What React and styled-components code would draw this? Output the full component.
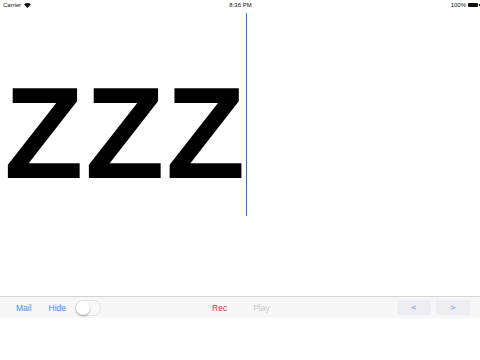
import React from "react";
import styled, { createGlobalStyle } from "styled-components";

const GlobalStyle = createGlobalStyle`
  html, body {
    margin: 0;
    padding: 0;
    background: #ffffff;
  }
  body {
    font-family: "Liberation Sans", Arial, sans-serif;
  }
`;

const Screen = styled.div`
  display: flex;
  flex-direction: column;
  width: 480px;
  height: 360px;
  overflow: hidden;
  background: #ffffff;
`;

const StatusBar = styled.div`
  display: grid;
  grid-template-columns: 1fr auto 1fr;
  align-items: center;
  height: 10px;
  padding: 0 2px 0 3px;
  font-size: 6px;
  color: #111;
`;

const StatusLeft = styled.div`
  display: flex;
  align-items: center;
  gap: 3px;
`;

const StatusRight = styled.div`
  display: flex;
  align-items: center;
  justify-content: flex-end;
  gap: 2px;
`;

const Battery = styled.div`
  width: 10px;
  height: 4px;
  background: #111;
  border-radius: 1px;
  position: relative;

  &::after {
    content: "";
    position: absolute;
    right: -2px;
    top: 1px;
    width: 1px;
    height: 2px;
    background: #111;
  }
`;

const Canvas = styled.div`
  flex: 1;
  display: flex;
  align-items: flex-start;
  padding: 3px 0 0 4px;
`;

const Typed = styled.div`
  width: 242px;
  margin-top: 55px;
  font-size: 130px;
  font-weight: 700;
  line-height: 130px;
  letter-spacing: 1.5px;
  color: #000;
  white-space: nowrap;
`;

const Cursor = styled.div`
  width: 1px;
  height: 203px;
  background: #2f6cf5;
`;

const Toolbar = styled.div`
  display: flex;
  align-items: center;
  height: 21px;
  border-top: 1px solid #d2d2d2;
  background: #f7f7f7;
  font-size: 8.5px;
  margin-bottom: 42px;
`;

const ToolButton = styled.span`
  color: ${(p) => p.$color || "#3a8ef6"};
  margin-left: ${(p) => p.$gap}px;
`;

const Toggle = styled.div`
  margin-left: ${(p) => p.$gap}px;
  width: 24px;
  height: 14px;
  border-radius: 8px;
  border: 1px solid #e4e4e4;
  background: #fafafa;
  position: relative;

  &::before {
    content: "";
    position: absolute;
    left: 0;
    top: 0;
    width: 14px;
    height: 14px;
    border-radius: 50%;
    background: #fff;
    box-shadow: 0 1px 2px rgba(0, 0, 0, 0.35);
  }
`;

const NavBox = styled.div`
  display: flex;
  align-items: center;
  justify-content: center;
  margin-left: ${(p) => p.$gap}px;
  width: 34px;
  height: 15px;
  background: #ededf2;
  color: #3a8ef6;
  font-size: 8px;
`;

const Wifi = () => (
  <svg width="7" height="5" viewBox="0 0 14 10">
    <path d="M7 10 L0 3 A10 10 0 0 1 14 3 Z" fill="#111" />
  </svg>
);

export default function App() {
  return (
    <>
      <GlobalStyle />
      <Screen>
        <StatusBar>
          <StatusLeft>
            Carrier <Wifi />
          </StatusLeft>
          <div>8:36 PM</div>
          <StatusRight>
            100% <Battery />
          </StatusRight>
        </StatusBar>
        <Canvas>
          <Typed>ZZZ</Typed>
          <Cursor />
        </Canvas>
        <Toolbar>
          <ToolButton $gap={16}>Mail</ToolButton>
          <ToolButton $gap={17}>Hide</ToolButton>
          <Toggle $gap={9} />
          <ToolButton $gap={111} $color="#e0313a">Rec</ToolButton>
          <ToolButton $gap={26} $color="#c9c9c9">Play</ToolButton>
          <NavBox $gap={127}>&lt;</NavBox>
          <NavBox $gap={5}>&gt;</NavBox>
        </Toolbar>
      </Screen>
    </>
  );
}
